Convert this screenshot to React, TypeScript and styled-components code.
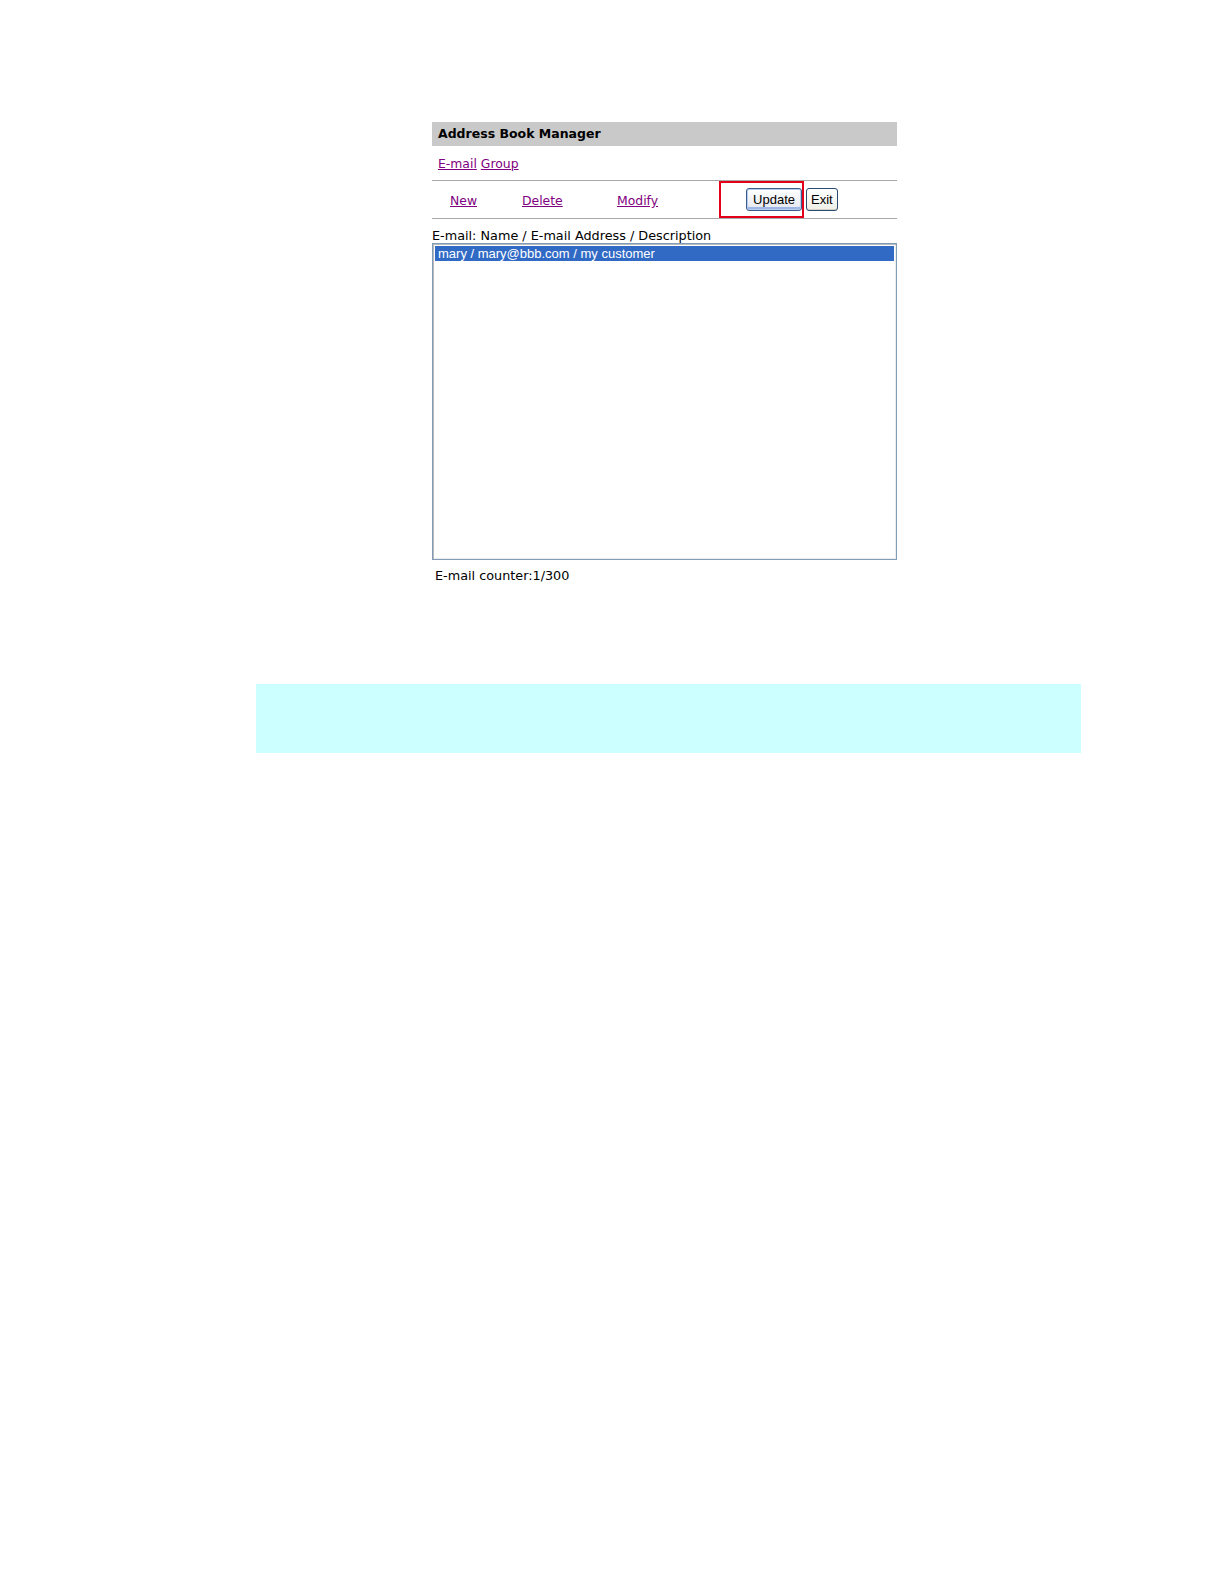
import React from "react";
import styled, { createGlobalStyle } from "styled-components";

const Global = createGlobalStyle`
  html, body { margin: 0; padding: 0; background: #ffffff; }
  body { font-family: "DejaVu Sans", Verdana, sans-serif; color: #000; }
`;

const Page = styled.div`
  padding: 122px 0 0 256px;
  width: 825px;
`;

const Panel = styled.div`
  margin-left: 176px;
  width: 465px;
  font-size: 12.8px;
`;

const TitleBar = styled.div`
  height: 24px;
  line-height: 24px;
  background: #c9c9c9;
  padding-left: 6px;
  font-weight: bold;
  font-size: 12.5px;
`;

const Tabs = styled.div`
  height: 34px;
  display: flex;
  align-items: center;
  gap: 4px;
  padding-left: 6px;
  border-bottom: 1px solid #a9a9a9;
`;

const Link = styled.a`
  color: #800080;
  text-decoration: underline;
  cursor: pointer;
  font-size: 12.4px;
`;

const Toolbar = styled.div`
  display: grid;
  grid-template-columns: 90px 95px 102px 85px auto;
  align-items: center;
  height: 37px;
  border-bottom: 1px solid #a9a9a9;
`;

const LinkCell = styled.div<{ $pad?: number }>`
  padding-left: ${(p) => p.$pad ?? 0}px;
  padding-top: 2px;
`;

const Highlight = styled.div`
  box-sizing: border-box;
  height: 37px;
  border: 2px solid #e3001b;
  display: flex;
  align-items: center;
  justify-content: flex-end;
`;

const Button = styled.button<{ $default?: boolean }>`
  box-sizing: border-box;
  height: 23px;
  padding: 0 ${(p) => (p.$default ? 6 : 4)}px;
  font-family: "Liberation Sans", Arial, sans-serif;
  font-size: 13px;
  color: #000;
  border-radius: 3px;
  border: 1px solid ${(p) => (p.$default ? "#3c5a8a" : "#2b4a72")};
  background: linear-gradient(#ffffff, ${(p) => (p.$default ? "#e3e6ee" : "#efefe8")});
  box-shadow: ${(p) =>
    p.$default ? "inset 0 0 0 1px #b6cdf0, inset 0 -2px 0 1px #9cb6e6" : "inset 0 -1px 0 #d6d3c8"};
  cursor: pointer;
  margin: 0;
`;

const ExitWrap = styled.div`
  padding-left: 2px;
  display: flex;
  align-items: center;
`;

const Label = styled.div`
  padding-top: 9px;
  height: 15px;
  line-height: 15px;
  white-space: pre;
`;

const ListBox = styled.div`
  box-sizing: border-box;
  height: 317px;
  border: 1px solid #7f9db9;
  box-shadow: inset 1px 1px 0 #b9b9b9, inset -1px -1px 0 #ececec;
  padding: 2px 2px;
  background: #fff;
`;

const Option = styled.div<{ $selected?: boolean }>`
  height: 15px;
  line-height: 15px;
  padding-left: 3px;
  font-family: "Liberation Sans", Tahoma, Arial, sans-serif;
  font-size: 13px;
  background: ${(p) => (p.$selected ? "#316ac5" : "transparent")};
  color: ${(p) => (p.$selected ? "#ffffff" : "#000")};
  white-space: nowrap;
`;

const Counter = styled.div`
  margin-top: 8px;
  padding-left: 3px;
  line-height: 15px;
`;

const Notice = styled.div`
  margin-top: 101px;
  height: 69px;
  background: #ccffff;
`;

export default function App() {
  return (
    <>
      <Global />
      <Page>
        <Panel>
          <TitleBar>Address Book Manager</TitleBar>
          <Tabs>
            <Link>E-mail</Link>
            <Link>Group</Link>
          </Tabs>
          <Toolbar>
            <LinkCell $pad={18}>
              <Link>New</Link>
            </LinkCell>
            <LinkCell>
              <Link>Delete</Link>
            </LinkCell>
            <LinkCell>
              <Link>Modify</Link>
            </LinkCell>
            <Highlight>
              <Button $default>Update</Button>
            </Highlight>
            <ExitWrap>
              <Button>Exit</Button>
            </ExitWrap>
          </Toolbar>
          <Label>E-mail: Name / E-mail Address / Description</Label>
          <ListBox>
            <Option $selected>mary / mary@bbb.com / my customer</Option>
          </ListBox>
          <Counter>E-mail counter:1/300</Counter>
        </Panel>
        <Notice />
      </Page>
    </>
  );
}
